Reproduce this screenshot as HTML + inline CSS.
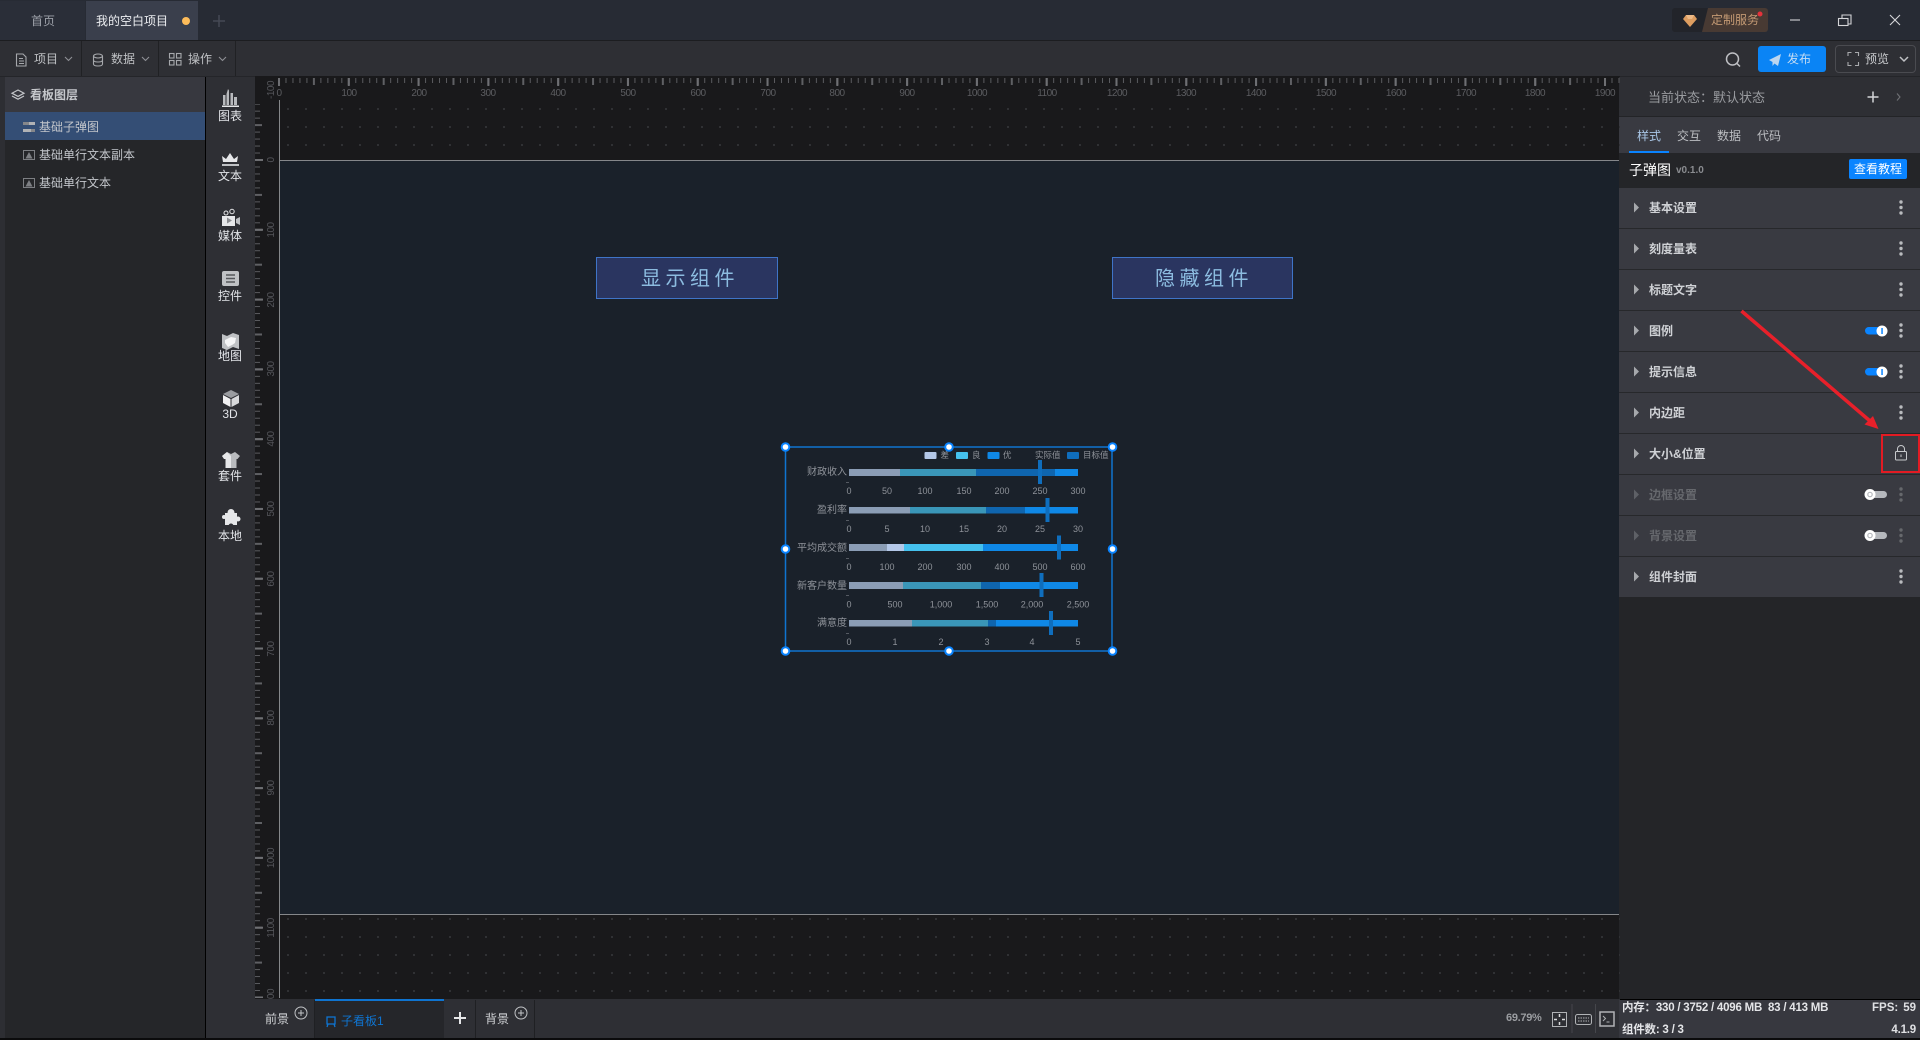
<!DOCTYPE html>
<html lang="zh"><head><meta charset="utf-8"><title>看板</title>
<style>
html,body{margin:0;padding:0;width:1920px;height:1040px;overflow:hidden;background:#000}
body{position:relative;font-family:"Liberation Sans","Noto Sans CJK SC",sans-serif}
.b{position:absolute}
.t{position:absolute;white-space:nowrap;line-height:1}
svg{position:absolute;left:0;top:0}
svg text{font-family:"Liberation Sans","Noto Sans CJK SC",sans-serif}
.s{font-size:12px;color:#e2e4e8;width:50px;text-align:center;left:205px}
.r{left:1649px;font-size:12px;font-weight:700;color:#cfd1d5}
.l{left:39px;font-size:12px;color:#c3c6cb}
</style></head><body>
<!-- backgrounds -->
<div class="b" style="left:0;top:0;width:1920px;height:40px;background:#272b34"></div>
<div class="b" style="left:0;top:40px;width:1920px;height:1px;background:#1c1d20"></div>
<div class="b" style="left:0;top:1px;width:85px;height:39px;background:#2a2e38"></div>
<div class="b" style="left:86px;top:1px;width:112px;height:39px;background:#3a3f4c"></div>
<div class="b" style="left:0;top:41px;width:1920px;height:35px;background:#2e2f34"></div>
<div class="b" style="left:81px;top:41px;width:1px;height:35px;background:#202124"></div>
<div class="b" style="left:158px;top:41px;width:1px;height:35px;background:#202124"></div>
<div class="b" style="left:235px;top:41px;width:1px;height:35px;background:#202124"></div>
<div class="b" style="left:0;top:76px;width:1920px;height:1px;background:#242529"></div>
<div class="b" style="left:0;top:77px;width:5px;height:961px;background:#2d2e33"></div>
<div class="b" style="left:5px;top:77px;width:200px;height:961px;background:#252629"></div>
<div class="b" style="left:5px;top:77px;width:200px;height:35px;background:#37383f"></div>
<div class="b" style="left:5px;top:112px;width:200px;height:28px;background:#344e75"></div>
<div class="b" style="left:206px;top:77px;width:49px;height:961px;background:#2e2f34"></div>
<div class="b" style="left:255px;top:76px;width:1365px;height:923px;background:#19191b"></div>
<div class="b" style="left:280px;top:161px;width:1340px;height:753px;background:#1a212a"></div>
<div class="b" style="left:279px;top:160px;width:1341px;height:1px;background:#85878a"></div>
<div class="b" style="left:279px;top:914px;width:1341px;height:1px;background:#85878a"></div>
<div class="b" style="left:279px;top:100px;width:1px;height:898px;background:#85878a"></div>
<!-- bottom bar -->
<div class="b" style="left:255px;top:999px;width:1365px;height:39px;background:#2e2f34"></div>
<div class="b" style="left:315px;top:1000px;width:129px;height:38px;background:#25262a"></div>
<div class="b" style="left:315px;top:999px;width:129px;height:2px;background:#0f74d0"></div>
<div class="b" style="left:314px;top:1000px;width:1px;height:38px;background:#1f2023"></div>
<div class="b" style="left:475px;top:1000px;width:1px;height:38px;background:#1f2023"></div>
<div class="b" style="left:534px;top:1000px;width:1px;height:38px;background:#1f2023"></div>
<div class="b" style="left:0;top:1038px;width:1920px;height:2px;background:#0b0b0c"></div>
<!-- right panel -->
<div class="b" style="left:1619px;top:77px;width:301px;height:39px;background:#2e2f34"></div>
<div class="b" style="left:1619px;top:116px;width:301px;height:1px;background:#232427"></div>
<div class="b" style="left:1619px;top:117px;width:301px;height:36px;background:#393a41"></div>
<div class="b" style="left:1619px;top:153px;width:301px;height:846px;background:#242528"></div>
<div class="b" style="left:1619px;top:188px;width:301px;height:409px;background:#393a41"></div>
<div class="b" style="left:1619px;top:228px;width:301px;height:1px;background:#27282b"></div>
<div class="b" style="left:1619px;top:269px;width:301px;height:1px;background:#27282b"></div>
<div class="b" style="left:1619px;top:310px;width:301px;height:1px;background:#27282b"></div>
<div class="b" style="left:1619px;top:351px;width:301px;height:1px;background:#27282b"></div>
<div class="b" style="left:1619px;top:392px;width:301px;height:1px;background:#27282b"></div>
<div class="b" style="left:1619px;top:433px;width:301px;height:1px;background:#27282b"></div>
<div class="b" style="left:1619px;top:474px;width:301px;height:1px;background:#27282b"></div>
<div class="b" style="left:1619px;top:515px;width:301px;height:1px;background:#27282b"></div>
<div class="b" style="left:1619px;top:556px;width:301px;height:1px;background:#27282b"></div>
<div class="b" style="left:1619px;top:1000px;width:301px;height:38px;background:#37383f"></div>
<div class="b" style="left:1629px;top:151px;width:40px;height:2px;background:#0a84ff"></div>
<div class="b" style="left:1849px;top:159px;width:58px;height:20px;background:#0a84ff;border-radius:2px"></div>
<div class="b" style="left:1758px;top:46px;width:68px;height:26px;background:#0a84f5;border-radius:3px"></div>
<div class="b" style="left:1835px;top:45px;width:79px;height:26px;border:1px solid #4a4b50;border-radius:4px"></div>
<div class="b" style="left:1672px;top:8px;width:30px;height:24px;background:#22242a;border-radius:3px 0 0 3px"></div>
<div class="b" style="left:1702px;top:8px;width:66px;height:24px;background:#483a33;border-radius:0 3px 3px 0"></div>
<!-- buttons -->
<div class="b" style="left:596px;top:257px;width:180px;height:40px;background:#2a3560;border:1px solid #3f74c7"></div>
<div class="b" style="left:1112px;top:257px;width:179px;height:40px;background:#2a3560;border:1px solid #3f74c7"></div>

<svg width="1920" height="1040" viewBox="0 0 1920 1040">
<defs>
<pattern id="dots" patternUnits="userSpaceOnUse" x="287" y="108" width="18" height="18"><rect width="2" height="2" fill="#303134"/></pattern>
<pattern id="hm" patternUnits="userSpaceOnUse" x="278.5" y="78" width="6.979" height="20"><rect width="1" height="5" fill="#5a5b5f"/></pattern>
<pattern id="hh" patternUnits="userSpaceOnUse" x="278" y="78" width="34.895" height="20"><rect width="2" height="7" fill="#5f6064"/></pattern>
<pattern id="hM" patternUnits="userSpaceOnUse" x="278" y="78" width="69.79" height="20"><rect width="2" height="8" fill="#6e6f73"/></pattern>
<pattern id="vm" patternUnits="userSpaceOnUse" x="255" y="159.5" width="30" height="6.979"><rect width="5" height="1" fill="#5a5b5f"/></pattern>
<pattern id="vh" patternUnits="userSpaceOnUse" x="255" y="159" width="30" height="34.895"><rect width="7" height="2" fill="#5f6064"/></pattern>
<pattern id="vM" patternUnits="userSpaceOnUse" x="255" y="159" width="30" height="69.79"><rect width="8" height="2" fill="#6e6f73"/></pattern>
</defs>
<rect x="280" y="100" width="1340" height="60" fill="url(#dots)"/>
<rect x="280" y="915" width="1340" height="84" fill="url(#dots)"/>
<rect x="278" y="78" width="1342" height="8" fill="url(#hm)"/>
<rect x="278" y="78" width="1342" height="8" fill="url(#hh)"/>
<rect x="278" y="78" width="1342" height="8" fill="url(#hM)"/>
<rect x="255" y="104" width="12" height="894" fill="url(#vm)"/>
<rect x="255" y="104" width="12" height="894" fill="url(#vh)"/>
<rect x="255" y="104" width="12" height="894" fill="url(#vM)"/>
<!-- horizontal ruler labels -->
<g fill="#5c5d61" font-size="10" text-anchor="middle" letter-spacing="-.5">
<text x="279" y="96">0</text><text x="349" y="96">100</text><text x="419" y="96">200</text><text x="488" y="96">300</text><text x="558" y="96">400</text><text x="628" y="96">500</text><text x="698" y="96">600</text><text x="768" y="96">700</text><text x="837" y="96">800</text><text x="907" y="96">900</text><text x="977" y="96">1000</text><text x="1047" y="96">1100</text><text x="1117" y="96">1200</text><text x="1186" y="96">1300</text><text x="1256" y="96">1400</text><text x="1326" y="96">1500</text><text x="1396" y="96">1600</text><text x="1466" y="96">1700</text><text x="1535" y="96">1800</text><text x="1605" y="96">1900</text>
</g>
<!-- vertical ruler labels -->
<g fill="#54555a" font-size="10" text-anchor="middle" letter-spacing="-.5">
<text transform="translate(274,90) rotate(-90)">-100</text>
<text transform="translate(274,160) rotate(-90)">0</text>
<text transform="translate(274,230) rotate(-90)">100</text>
<text transform="translate(274,300) rotate(-90)">200</text>
<text transform="translate(274,369) rotate(-90)">300</text>
<text transform="translate(274,439) rotate(-90)">400</text>
<text transform="translate(274,509) rotate(-90)">500</text>
<text transform="translate(274,579) rotate(-90)">600</text>
<text transform="translate(274,649) rotate(-90)">700</text>
<text transform="translate(274,718) rotate(-90)">800</text>
<text transform="translate(274,788) rotate(-90)">900</text>
<text transform="translate(274,858) rotate(-90)">1000</text>
<text transform="translate(274,928) rotate(-90)">1100</text>
<text transform="translate(274,994) rotate(-90)">00</text>
</g>
<!-- chart -->
<g>
<rect x="849" y="469" width="51" height="7" fill="#8b9db5"/><rect x="900" y="469" width="76" height="7" fill="#3a96b8"/><rect x="976" y="469" width="79" height="7" fill="#0f65ae"/><rect x="1055" y="469" width="23" height="7" fill="#0f88e6"/><rect x="1038" y="460" width="4" height="24" fill="#0f6ebd"/>
<rect x="849" y="507" width="61" height="6.500" fill="#8b9db5"/><rect x="910" y="507" width="76" height="6.500" fill="#3a96b8"/><rect x="986" y="507" width="39" height="6.500" fill="#0f65ae"/><rect x="1025" y="507" width="53" height="6.500" fill="#0f88e6"/><rect x="1045.500" y="498" width="4" height="24" fill="#0f6ebd"/>
<rect x="849" y="544" width="38" height="7" fill="#8b9db5"/><rect x="887" y="544" width="17" height="7" fill="#b4c8e8"/><rect x="904" y="544" width="79" height="7" fill="#45c1ee"/><rect x="983" y="544" width="95" height="7" fill="#0f88e6"/><rect x="1057" y="535.500" width="4" height="24" fill="#0f6ebd"/>
<rect x="849" y="582" width="54" height="7" fill="#8b9db5"/><rect x="903" y="582" width="78" height="7" fill="#3a96b8"/><rect x="981" y="582" width="19" height="7" fill="#0f65ae"/><rect x="1000" y="582" width="78" height="7" fill="#0f88e6"/><rect x="1039.500" y="573" width="4" height="24" fill="#0f6ebd"/>
<rect x="849" y="620" width="63" height="6.500" fill="#8b9db5"/><rect x="912" y="620" width="76" height="6.500" fill="#3a96b8"/><rect x="988" y="620" width="8" height="6.500" fill="#0f65ae"/><rect x="996" y="620" width="82" height="6.500" fill="#0f88e6"/><rect x="1049" y="611" width="4" height="24" fill="#0f6ebd"/>
<g fill="#555a62"><rect x="846" y="482" width="3" height="1"/><rect x="846" y="520" width="3" height="1"/><rect x="846" y="558" width="3" height="1"/><rect x="846" y="595" width="3" height="1"/><rect x="846" y="633" width="3" height="1"/></g>
<g fill="#8e9299" font-size="10" text-anchor="end">
<text x="847" y="475">财政收入</text><text x="847" y="513">盈利率</text><text x="847" y="551">平均成交额</text><text x="847" y="589">新客户数量</text><text x="847" y="626">满意度</text>
</g>
<g fill="#8e9299" font-size="9" text-anchor="middle">
<text x="849" y="494">0</text><text x="887" y="494">50</text><text x="925" y="494">100</text><text x="964" y="494">150</text><text x="1002" y="494">200</text><text x="1040" y="494">250</text><text x="1078" y="494">300</text>
<text x="849" y="532">0</text><text x="887" y="532">5</text><text x="925" y="532">10</text><text x="964" y="532">15</text><text x="1002" y="532">20</text><text x="1040" y="532">25</text><text x="1078" y="532">30</text>
<text x="849" y="570">0</text><text x="887" y="570">100</text><text x="925" y="570">200</text><text x="964" y="570">300</text><text x="1002" y="570">400</text><text x="1040" y="570">500</text><text x="1078" y="570">600</text>
<text x="849" y="607.500">0</text><text x="895" y="607.500">500</text><text x="941" y="607.500">1,000</text><text x="987" y="607.500">1,500</text><text x="1032" y="607.500">2,000</text><text x="1078" y="607.500">2,500</text>
<text x="849" y="645">0</text><text x="895" y="645">1</text><text x="941" y="645">2</text><text x="987" y="645">3</text><text x="1032" y="645">4</text><text x="1078" y="645">5</text>
</g>
<rect x="924.500" y="452" width="12" height="7" rx="1" fill="#b4c8e8"/><rect x="956" y="452" width="12" height="7" rx="1" fill="#45c1ee"/><rect x="987.500" y="452" width="12" height="7" rx="1" fill="#0f88e6"/><rect x="1067" y="452" width="12" height="7" rx="1" fill="#0f6ebd"/>
<g fill="#8e9299" font-size="8.500"><text x="940.500" y="458">差</text><text x="972" y="458">良</text><text x="1003" y="458">优</text><text x="1035" y="458">实际值</text><text x="1083" y="458">目标值</text></g>
<rect x="785.500" y="447" width="326.500" height="204" fill="none" stroke="#0f74d0" stroke-width="1.500"/>
<g fill="#fff" stroke="#0a84ff" stroke-width="2">
<circle cx="785.500" cy="447" r="3.800"/><circle cx="949" cy="447" r="3.800"/><circle cx="1112.500" cy="447" r="3.800"/><circle cx="785.500" cy="549" r="3.800"/><circle cx="1112.500" cy="549" r="3.800"/><circle cx="785.500" cy="651" r="3.800"/><circle cx="949" cy="651" r="3.800"/><circle cx="1112.500" cy="651" r="3.800"/>
</g>
</g>
<!-- tab dot, plus -->
<circle cx="186" cy="21" r="4" fill="#fdbc5a"/>
<path d="M219 15v12M213 21h12" stroke="#454954" stroke-width="1.500"/>
<!-- toolbar icons -->
<g fill="none" stroke="#a6a8ac" stroke-width="1.100">
<path d="M16.500 54h6.500l3 3v9h-9.500zM19 58.500h4M19 61h5M19 63.500h5"/>
<path d="M65 57l3.500 3.500L72 57M142 57l3.500 3.500L149 57M219 57l3.500 3.500L226 57" stroke="#8e9095"/>
<ellipse cx="98" cy="56" rx="4.500" ry="2"/><path d="M93.500 56v8c0 1.300 2 2 4.500 2s4.500-.7 4.500-2v-8M93.500 60c0 1.300 2 2 4.500 2s4.500-.7 4.500-2"/>
<rect x="169.500" y="53.500" width="4.500" height="4.500"/><rect x="176.500" y="53.500" width="4.500" height="4.500"/><rect x="169.500" y="60.500" width="4.500" height="4.500"/><rect x="176.500" y="60.500" width="4.500" height="4.500"/>
</g>
<!-- left layers -->
<g fill="none" stroke="#c4c6ca" stroke-width="1.200">
<path d="M18 90l6 3.200-6 3.200-6-3.200z"/><path d="M12 96l6 3.200 6-3.200"/>
</g>
<rect x="23" y="122" width="12" height="3" fill="#b0b2b5"/><rect x="23" y="122" width="6" height="3" fill="#85878b"/><rect x="23" y="129" width="12" height="3" fill="#85878b"/><rect x="23" y="129" width="8" height="3" fill="#b0b2b5"/>
<g fill="none" stroke="#7d7f83"><rect x="23.500" y="150.500" width="11" height="9"/><rect x="23.500" y="178.500" width="11" height="9"/></g>
<path d="M29 152l3.500 6.500h-7zM29 180l3.500 6.500h-7z" fill="#7d7f83"/>
<!-- sidebar icons -->
<g fill="#e6e7e9">
<path d="M223 105v-10h2.500v10zM226.500 105V94l1.500-5 1 1.500V105zM230.500 105V93h2.500v12zM234 105v-8h3v8z" fill="#b8babd"/>
<rect x="222" y="105.500" width="17" height="1.500"/>
<path d="M223 162l-1-6 4 3 4-6 4 6 4-3-1 6z"/><rect x="222" y="164" width="17" height="2" fill="#bfc1c4"/>
<path d="M222 216h13v10h-13z"/><circle cx="226" cy="213" r="2" fill="none" stroke="#e6e7e9"/><circle cx="232" cy="211.500" r="2.200" fill="none" stroke="#e6e7e9"/><path d="M236 219l4-2v8l-4-2z" fill="#bfc1c4"/><path d="M227 217.500l5 3-5 3z" fill="#8a8c90"/>
<rect x="222" y="271" width="17" height="15" rx="2" fill="#c0c2c5"/><path d="M226 275h9M226 278.500h9M226 282h9" stroke="#55575b" stroke-width="1.500"/>
<path d="M222 334l5 2 6-3 6 2v14l-6-2-6 3-5-2z" fill="#bfc1c4"/><path d="M225 340l6-3 5 1-1 5-3 2-4 2-3-4z" fill="#f5f5f6"/>
<path d="M231 390l8 4-8 4-8-4z" fill="#9a9ca0"/><path d="M223 395l7.500 4v8l-7.500-4z" fill="#f1f1f2"/><path d="M239 395l-7.500 4v8l7.500-4z" fill="#d8d9db"/>
<path d="M227 452l4 2 4-2 5 4-2.500 3h-1v9h-11v-9h-1L222 456z" fill="#b9bbbe"/><path d="M227 452l4 4v12h-5.500v-9H224l-2-3z" fill="#e6e7e9"/>
<rect x="225" y="513" width="12" height="12"/><circle cx="231" cy="512.500" r="3.500"/><circle cx="238" cy="519" r="2.500"/><circle cx="224" cy="517" r="2"/><circle cx="231" cy="526" r="2.500" fill="#2e2f34"/>
</g>
<!-- top right -->
<path d="M1686 15h8l3 4-7 8-7-8z" fill="#dd9d60"/><path d="M1686 15l2 4h4l2-4z" fill="#eeba86"/>
<path d="M1702 32l6-24h-6z" fill="#22242a"/>
<circle cx="1760" cy="14" r="2.500" fill="#e5323b"/>
<g fill="none" stroke="#d5d6d9" stroke-width="1.100">
<path d="M1790 20h10"/>
<path d="M1842 18v-3h9v9h-3"/><rect x="1838.500" y="18.500" width="9.500" height="7"/>
<path d="M1890 15l10 10M1900 15l-10 10"/>
<circle cx="1732.500" cy="59" r="6" stroke="#bfc0c4" stroke-width="1.500"/><path d="M1737 63.500l3 3" stroke="#bfc0c4" stroke-width="1.500"/>
<path d="M1848 56v-3.500h3.500M1855 52.500h3.500V56M1858.500 62v3.500H1855M1851.500 65.500H1848V62" stroke="#a8aaad"/>
<path d="M1900 57l4 4 4-4" stroke="#c0c2c5" stroke-width="1.500"/>
<path d="M1873 91.500v11M1867.500 97h11" stroke="#d4d5d8" stroke-width="1.500"/>
<path d="M1897 93.500l3 3.500-3 3.500" stroke="#6f7175"/>
</g>
<path d="M1769 60l12-6-3 12-3.500-2.500-2 2.500v-4z" fill="#bcd6f0"/>
<!-- triangles -->
<g fill="#a6a8ac"><path d="M1634 202.500l5 5-5 5zM1634 243.500l5 5-5 5zM1634 284.500l5 5-5 5zM1634 325.500l5 5-5 5zM1634 366.500l5 5-5 5zM1634 407.500l5 5-5 5zM1634 448.500l5 5-5 5zM1634 571.500l5 5-5 5z"/></g>
<g fill="#5e6066"><path d="M1634 489.500l5 5-5 5zM1634 530.500l5 5-5 5z"/></g>
<!-- menu dots -->
<g fill="#b9bbbe"><circle cx="1901" cy="202" r="1.700"/><circle cx="1901" cy="207.500" r="1.700"/><circle cx="1901" cy="213" r="1.700"/>
<circle cx="1901" cy="243" r="1.700"/><circle cx="1901" cy="248.500" r="1.700"/><circle cx="1901" cy="254" r="1.700"/>
<circle cx="1901" cy="284" r="1.700"/><circle cx="1901" cy="289.500" r="1.700"/><circle cx="1901" cy="295" r="1.700"/>
<circle cx="1901" cy="325" r="1.700"/><circle cx="1901" cy="330.500" r="1.700"/><circle cx="1901" cy="336" r="1.700"/>
<circle cx="1901" cy="366" r="1.700"/><circle cx="1901" cy="371.500" r="1.700"/><circle cx="1901" cy="377" r="1.700"/>
<circle cx="1901" cy="407" r="1.700"/><circle cx="1901" cy="412.500" r="1.700"/><circle cx="1901" cy="418" r="1.700"/>
<circle cx="1901" cy="571" r="1.700"/><circle cx="1901" cy="576.500" r="1.700"/><circle cx="1901" cy="582" r="1.700"/></g>
<g fill="#66686c"><circle cx="1901" cy="489" r="1.700"/><circle cx="1901" cy="494.500" r="1.700"/><circle cx="1901" cy="500" r="1.700"/>
<circle cx="1901" cy="530" r="1.700"/><circle cx="1901" cy="535.500" r="1.700"/><circle cx="1901" cy="541" r="1.700"/></g>
<!-- toggles -->
<rect x="1865" y="327" width="18" height="7.500" rx="3.700" fill="#0a84ff"/><circle cx="1882" cy="331" r="5.500" fill="#fff"/><rect x="1881.300" y="328" width="1.500" height="6" fill="#0a84ff"/>
<rect x="1865" y="368" width="18" height="7.500" rx="3.700" fill="#0a84ff"/><circle cx="1882" cy="372" r="5.500" fill="#fff"/><rect x="1881.300" y="369" width="1.500" height="6" fill="#0a84ff"/>
<rect x="1870" y="491" width="17" height="7" rx="3.500" fill="#b5b8bd"/><circle cx="1870" cy="494.500" r="5.500" fill="#fff"/><circle cx="1870" cy="494.500" r="2.200" fill="#fff" stroke="#b5b8bd" stroke-width="1.200"/>
<rect x="1870" y="532" width="17" height="7" rx="3.500" fill="#b5b8bd"/><circle cx="1870" cy="535.500" r="5.500" fill="#fff"/><circle cx="1870" cy="535.500" r="2.200" fill="#fff" stroke="#b5b8bd" stroke-width="1.200"/>
<!-- lock & red -->
<g fill="none" stroke="#c7c9cc"><rect x="1895.500" y="451.500" width="11" height="8.500" rx="1"/><path d="M1897.500 451.500v-2.500a3.500 3.500 0 017 0v2.500"/><path d="M1901 454.500v2.500"/></g>
<rect x="1882" y="435" width="37" height="37" fill="none" stroke="#e21b23" stroke-width="2"/>
<path d="M1741.500 311L1870 421" stroke="#e8202a" stroke-width="3.500"/>
<path d="M1878.500 429l-14-4.500 8.500-8.500z" fill="#e8202a"/>
<!-- bottom icons -->
<g fill="none" stroke="#c3c5c8"><circle cx="301" cy="1013" r="6"/><path d="M301 1010v6M298 1013h6"/><circle cx="521" cy="1013" r="6"/><path d="M521 1010v6M518 1013h6"/></g>
<path d="M460 1012v12M454 1018h12" stroke="#e6e7e9" stroke-width="2"/>
<g fill="none" stroke="#0f74d0" stroke-width="1.300"><rect x="327" y="1017" width="8" height="7"/><path d="M328 1024l-1 3M334 1024l1 3"/></g>
<g fill="none" stroke="#b0b2b5">
<rect x="1552.500" y="1012.500" width="14" height="14"/><path d="M1559.500 1014v3M1559.500 1022v3M1554 1019.500h3M1562 1019.500h3" stroke="#d9dadc" stroke-width="1.500"/>
<rect x="1575.500" y="1014.500" width="16" height="10" rx="2"/><path d="M1578 1018h11M1578 1021h11" stroke-dasharray="1.500 1"/>
<rect x="1600" y="1012" width="14" height="14" stroke-width="1.500"/><path d="M1603 1016l2.500 2.500-2.500 2.500M1606.500 1022h3"/>
<path d="M1572 1004v29M1595.500 1004v29" stroke="#45464b"/>
</g>
</svg>

<!-- text -->
<div class="t" style="left:31px;top:15px;font-size:12px;color:#9ca0a8">首页</div>
<div class="t" style="left:96px;top:15px;font-size:12px;color:#eceef1">我的空白项目</div>
<div class="t" style="left:34px;top:53px;font-size:12px;color:#bfc1c4">项目</div>
<div class="t" style="left:111px;top:53px;font-size:12px;color:#bfc1c4">数据</div>
<div class="t" style="left:188px;top:53px;font-size:12px;color:#bfc1c4">操作</div>
<div class="t" style="left:30px;top:89px;font-size:12px;font-weight:700;color:#c6c8cc">看板图层</div>
<div class="t l" style="top:121px;">基础子弹图</div>
<div class="t l" style="top:149px">基础单行文本副本</div>
<div class="t l" style="top:177px">基础单行文本</div>

<div class="t s" style="top:110px">图表</div>
<div class="t s" style="top:170px">文本</div>
<div class="t s" style="top:230px">媒体</div>
<div class="t s" style="top:290px">控件</div>
<div class="t s" style="top:350px">地图</div>
<div class="t s" style="top:408px">3D</div>
<div class="t s" style="top:470px">套件</div>
<div class="t s" style="top:530px">本地</div>

<div class="t" style="left:641px;top:269px;font-size:20px;letter-spacing:4.500px;color:#8cbce0">显示组件</div>
<div class="t" style="left:1155px;top:269px;font-size:20px;letter-spacing:4.500px;color:#8cbce0">隐藏组件</div>

<div class="t" style="left:1711px;top:14px;font-size:12px;color:#c49a74">定制服务</div>
<div class="t" style="left:1787px;top:53px;font-size:12px;color:#c4dcf4">发布</div>
<div class="t" style="left:1865px;top:53px;font-size:12px;color:#c9cbce">预览</div>
<div class="t" style="left:1648px;top:91px;font-size:13px;color:#9a9ca0">当前状态：默认状态</div>
<div class="t" style="left:1637px;top:130px;font-size:12px;color:#a9c6e6">样式</div>
<div class="t" style="left:1677px;top:130px;font-size:12px;color:#bcbec2">交互</div>
<div class="t" style="left:1717px;top:130px;font-size:12px;color:#bcbec2">数据</div>
<div class="t" style="left:1757px;top:130px;font-size:12px;color:#bcbec2">代码</div>
<div class="t" style="left:1629px;top:163px;font-size:14px;color:#fff">子弹图</div>
<div class="t" style="left:1676px;top:166px;font-size:10px;font-weight:700;color:#8a8c90">v0.1.0</div>
<div class="t" style="left:1854px;top:163px;font-size:12px;color:#fff">查看教程</div>

<div class="t r" style="top:202px">基本设置</div>
<div class="t r" style="top:243px">刻度量表</div>
<div class="t r" style="top:284px">标题文字</div>
<div class="t r" style="top:325px">图例</div>
<div class="t r" style="top:366px">提示信息</div>
<div class="t r" style="top:407px">内边距</div>
<div class="t r" style="top:448px">大小&amp;位置</div>
<div class="t r" style="top:489px;color:#66686d">边框设置</div>
<div class="t r" style="top:530px;color:#66686d">背景设置</div>
<div class="t r" style="top:571px">组件封面</div>

<div class="t" style="left:265px;top:1013px;font-size:12px;color:#d0d2d5">前景</div>
<div class="t" style="left:341px;top:1015px;font-size:12px;color:#0f74d0">子看板1</div>
<div class="t" style="left:485px;top:1013px;font-size:12px;color:#d0d2d5">背景</div>
<div class="t" style="left:1506px;top:1013px;font-size:11px;font-weight:700;letter-spacing:-.3px;color:#9b9da1">69.79%</div>
<div class="t" style="left:1622px;top:1003px;font-size:11.500px;font-weight:700;letter-spacing:-.22px;color:#e4e5e8">内存：330 / 3752 / 4096 MB&nbsp; 83 / 413 MB</div>
<div class="t" style="left:1622px;top:1025px;font-size:11.500px;font-weight:700;letter-spacing:-.22px;color:#e4e5e8">组件数: 3 / 3</div>
<div class="t" style="left:1872px;top:1003px;font-size:11.500px;font-weight:700;color:#dfe0e3">FPS:</div>
<div class="t" style="right:4px;top:1003px;font-size:11.500px;font-weight:700;color:#dfe0e3">59</div>
<div class="t" style="right:4px;top:1025px;font-size:11.500px;font-weight:700;letter-spacing:-.2px;color:#dfe0e3">4.1.9</div>
</body></html>
